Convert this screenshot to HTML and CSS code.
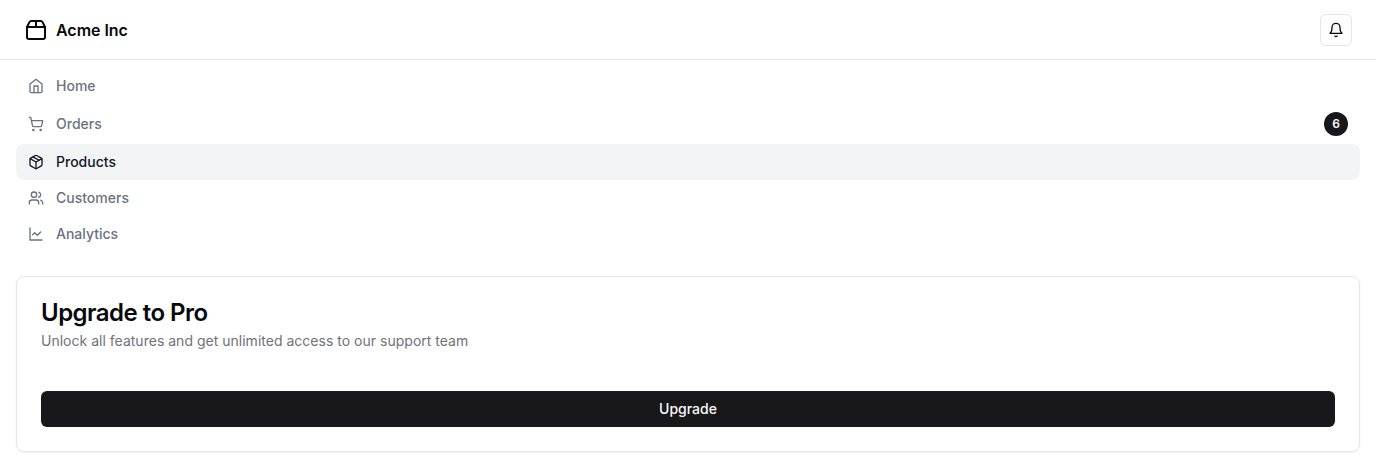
FILE: index.html
```html
<!DOCTYPE html>
<html lang="en">
<head>
<meta charset="utf-8">
<title>Acme Inc</title>
<link rel="stylesheet" href="styles.css">
</head>
<body>
<header class="header">
  <a class="brand">
    <svg class="icon icon-lg" viewBox="0 0 24 24"><path d="M3 9h18v10a2 2 0 0 1-2 2H5a2 2 0 0 1-2-2V9Z"/><path d="m3 9 2.45-4.9A2 2 0 0 1 7.24 3h9.52a2 2 0 0 1 1.8 1.1L21 9"/><path d="M12 3v6"/></svg>
    <span>Acme Inc</span>
  </a>
  <button class="bell" aria-label="Notifications">
    <svg class="icon" viewBox="0 0 24 24"><path d="M6 8a6 6 0 0 1 12 0c0 7 3 9 3 9H3s3-2 3-9"/><path d="M10.3 21a1.94 1.94 0 0 0 3.4 0"/></svg>
  </button>
</header>
<nav class="nav">
  <a class="nav-link"><svg class="icon" viewBox="0 0 24 24"><path d="m3 9 9-7 9 7v11a2 2 0 0 1-2 2H5a2 2 0 0 1-2-2z"/><path d="M9 22V12h6v10"/></svg>Home</a>
  <a class="nav-link"><svg class="icon" viewBox="0 0 24 24"><circle cx="8" cy="21" r="1"/><circle cx="19" cy="21" r="1"/><path d="M2.05 2.05h2l2.66 12.42a2 2 0 0 0 2 1.58h9.78a2 2 0 0 0 1.95-1.57l1.65-7.43H5.12"/></svg>Orders<span class="badge">6</span></a>
  <a class="nav-link active"><svg class="icon" viewBox="0 0 24 24"><path d="m7.5 4.27 9 5.15"/><path d="M21 8a2 2 0 0 0-1-1.73l-7-4a2 2 0 0 0-2 0l-7 4A2 2 0 0 0 3 8v8a2 2 0 0 0 1 1.73l7 4a2 2 0 0 0 2 0l7-4A2 2 0 0 0 21 16Z"/><path d="m3.3 7 8.7 5 8.7-5"/><path d="M12 22V12"/></svg>Products</a>
  <a class="nav-link"><svg class="icon" viewBox="0 0 24 24"><path d="M16 21v-2a4 4 0 0 0-4-4H6a4 4 0 0 0-4 4v2"/><circle cx="9" cy="7" r="4"/><path d="M22 21v-2a4 4 0 0 0-3-3.87"/><path d="M16 3.13a4 4 0 0 1 0 7.75"/></svg>Customers</a>
  <a class="nav-link"><svg class="icon" viewBox="0 0 24 24"><path d="M3 3v18h18"/><path d="m19 9-5 5-4-4-3 3"/></svg>Analytics</a>
</nav>
<div class="promo">
  <section class="card">
    <h3 class="card-title">Upgrade to Pro</h3>
    <p class="card-text">Unlock all features and get unlimited access to our support team</p>
    <button class="upgrade">Upgrade</button>
  </section>
</div>
</body>
</html>
```
FILE: styles.css
```css
* { box-sizing: border-box; }
body {
  margin: 0;
  background: #fff;
  color: #09090b;
  font-family: Inter, sans-serif;
  font-size: 14px;
  line-height: 20px;
}
.icon {
  width: 16px;
  height: 16px;
  flex: none;
  fill: none;
  stroke: currentColor;
  stroke-width: 2;
  stroke-linecap: round;
  stroke-linejoin: round;
}
.icon-lg { width: 24px; height: 24px; }
.header {
  display: flex;
  align-items: center;
  justify-content: space-between;
  height: 60px;
  padding: 0 24px;
  border-bottom: 1px solid #e4e4e7;
}
.brand {
  display: flex;
  align-items: center;
  gap: 8px;
  font-size: 16px;
  line-height: 24px;
  font-weight: 600;
  letter-spacing: -0.04px;
}
.bell {
  display: flex;
  align-items: center;
  justify-content: center;
  width: 32px;
  height: 32px;
  padding: 0;
  border: 1px solid #e4e4e7;
  border-radius: 6px;
  background: #fff;
  color: inherit;
}
.nav {
  display: grid;
  padding: 8px 16px 0;
  font-weight: 500;
}
.nav-link {
  display: flex;
  align-items: center;
  gap: 12px;
  padding: 8px 12px;
  border-radius: 8px;
  color: #6b7280;
}
.active { background: #f3f4f6; color: #111827; }
.badge {
  display: flex;
  align-items: center;
  justify-content: center;
  width: 24px;
  height: 24px;
  margin-left: auto;
  border-radius: 50%;
  background: #18181b;
  color: #fafafa;
  font-size: 12px;
  line-height: 16px;
  font-weight: 600;
}
.promo { padding: 24px 16px 16px; }
.card {
  padding: 24px;
  border: 1px solid #e4e4e7;
  border-radius: 8px;
  box-shadow: 0 1px 2px rgb(0 0 0 / 5%);
}
.card-title {
  margin: 0;
  font-size: 24px;
  line-height: 24px;
  font-weight: 600;
  letter-spacing: -0.53px;
}
.card-text {
  margin: 6px 0 40px;
  color: #71717a;
  letter-spacing: 0.012px;
}
.upgrade {
  display: block;
  width: 100%;
  height: 36px;
  border: 0;
  border-radius: 6px;
  background: #18181b;
  color: #fafafa;
  font: 500 14px/20px Inter, sans-serif;
}
```
